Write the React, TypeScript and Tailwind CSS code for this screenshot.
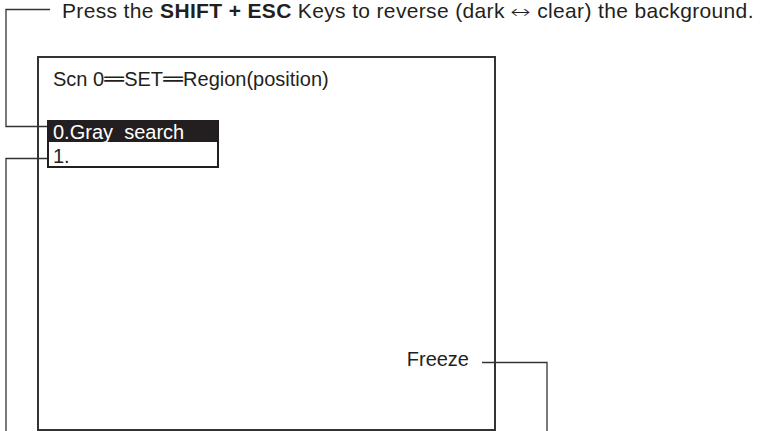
import React from 'react';

const Eq = () => (
  <span className="inline-block w-[20px] text-center">
    <span className="inline-block origin-center scale-x-[1.6] font-['DejaVu_Sans',sans-serif]">═</span>
  </span>
);

export default function App() {
  return (
    <div className="relative w-[760px] h-[431px] overflow-hidden bg-white font-['Liberation_Sans',Arial,sans-serif] text-[20px] leading-none text-[#231f20]">
      <p className="h-[20px] pl-[62px] text-[21px] tracking-[0.35px] whitespace-pre">
        Press the <b>SHIFT + ESC</b> Keys to reverse (dark{' '}
        <span className="inline-block w-[20px] text-center">
          <span className="inline-block origin-center scale-x-[1.35] font-['DejaVu_Sans',sans-serif] text-[18px] font-extralight">↔</span>
        </span>{' '}
        clear) the background.
      </p>

      <div className="ml-[37px] mt-[36px] flex h-[375px] w-[459px] flex-col border-2 border-[#333]">
        <div className="mt-[11px] pl-[14px]">
          Scn 0<Eq />SET<Eq />Region(position)
        </div>

        <div className="ml-[8px] mt-[31px] w-[172px] border-2 border-[#231f20]">
          <div className="h-[20px] bg-[#231f20] pl-[4px] whitespace-pre text-white">0.Gray  search</div>
          <div className="h-[24px] pl-[4px] pt-[4px]">1.</div>
        </div>

        <div className="mt-[181px] flex justify-end pr-[25px]">Freeze</div>
      </div>

      {/* leader lines */}
      <svg className="pointer-events-none absolute inset-0" width="760" height="431">
        <g fill="none" stroke="#333" strokeWidth="1.3">
          <path d="M50 9.5 H6 V126.5 H47" />
          <path d="M47 158.5 H6 V431" />
          <path d="M482 362.5 H547 V431" />
        </g>
      </svg>
    </div>
  );
}
